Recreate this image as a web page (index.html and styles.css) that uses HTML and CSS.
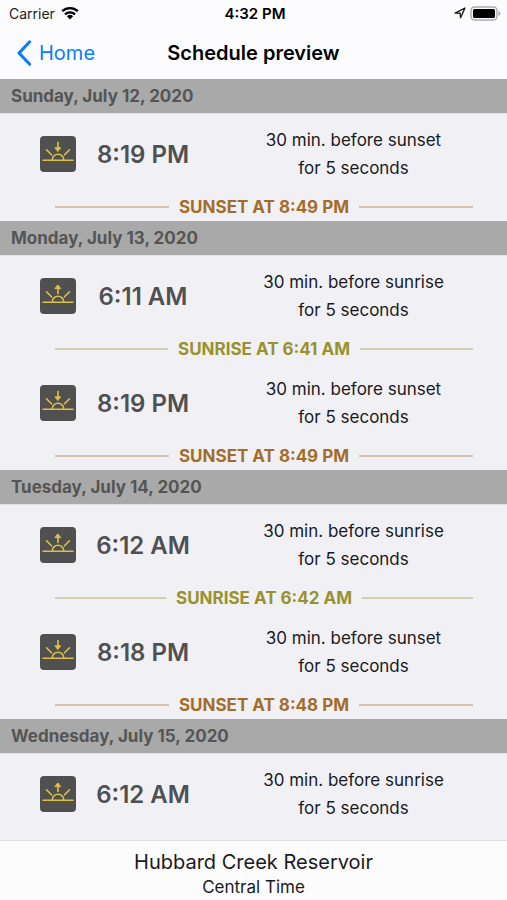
FILE: index.html
```html
<!DOCTYPE html>
<html lang="en">
<head>
<meta charset="utf-8">
<meta name="viewport" content="width=device-width, initial-scale=1">
<title>Schedule preview</title>
<link rel="stylesheet" href="styles.css">
</head>
<body>
<svg class="defs" aria-hidden="true">
  <symbol id="sun" viewBox="0 0 36 36">
    <path d="M3 24.3h30M12.2 24a5.8 5.8 0 0 1 11.6 0M6.5 13.8l5 5M29.5 13.8l-5 5"/>
  </symbol>
  <symbol id="sunset" viewBox="0 0 36 36">
    <use href="#sun"/>
    <path d="M18 6.5v8"/><path class="tip" d="M15.3 11.8h5.4L18 15.2z"/>
  </symbol>
  <symbol id="sunrise" viewBox="0 0 36 36">
    <use href="#sun"/>
    <path d="M18 8v7.5"/><path class="tip" d="M15.3 10.6h5.4L18 7.2z"/>
  </symbol>
</svg>
<header class="top">
  <div class="status">
    <span class="carrier">Carrier
      <svg class="wifi" viewBox="0 0 18 14" aria-hidden="true"><path d="M1.2 5.2a11.2 11.2 0 0 1 15.6 0M4 8.3a7.2 7.2 0 0 1 10 0"/><path class="dot" d="M9 13.4 5.9 10.3a4.5 4.5 0 0 1 6.2 0z"/></svg>
    </span>
    <span class="clock">4:32 PM</span>
    <span class="power">
      <svg class="location" viewBox="0 0 12 12" aria-hidden="true"><path d="M1 6.1 10.9 1.1 6.6 10.7 6.2 6.2z"/></svg>
      <svg class="battery" viewBox="0 0 31 15" aria-hidden="true"><rect class="shell" x="1" y="1" width="26" height="13" rx="3.5"/><rect x="3" y="3" width="22" height="9" rx="1.5"/><path class="cap" d="M28.5 5q2 1 2 2.5t-2 2.5z"/></svg>
    </span>
  </div>
  <nav class="nav">
    <a class="back" href="#home"><svg class="chevron" viewBox="0 0 16 26" aria-hidden="true"><path d="M13.5 2 3 13l10.5 11"/></svg>Home</a>
    <h1>Schedule preview</h1>
  </nav>
</header>
<main class="list">
  <section>
    <h2>Sunday, July 12, 2020</h2>
    <div class="event"><svg class="icon"><use href="#sunset"/></svg><time>8:19 PM</time><p>30 min. before sunset<br>for 5 seconds</p></div>
    <div class="marker sunset">SUNSET AT 8:49 PM</div>
  </section>
  <section>
    <h2>Monday, July 13, 2020</h2>
    <div class="event"><svg class="icon"><use href="#sunrise"/></svg><time>6:11 AM</time><p>30 min. before sunrise<br>for 5 seconds</p></div>
    <div class="marker sunrise">SUNRISE AT 6:41 AM</div>
    <div class="event"><svg class="icon"><use href="#sunset"/></svg><time>8:19 PM</time><p>30 min. before sunset<br>for 5 seconds</p></div>
    <div class="marker sunset">SUNSET AT 8:49 PM</div>
  </section>
  <section>
    <h2>Tuesday, July 14, 2020</h2>
    <div class="event"><svg class="icon"><use href="#sunrise"/></svg><time>6:12 AM</time><p>30 min. before sunrise<br>for 5 seconds</p></div>
    <div class="marker sunrise">SUNRISE AT 6:42 AM</div>
    <div class="event"><svg class="icon"><use href="#sunset"/></svg><time>8:18 PM</time><p>30 min. before sunset<br>for 5 seconds</p></div>
    <div class="marker sunset">SUNSET AT 8:48 PM</div>
  </section>
  <section>
    <h2>Wednesday, July 15, 2020</h2>
    <div class="event"><svg class="icon"><use href="#sunrise"/></svg><time>6:12 AM</time><p>30 min. before sunrise<br>for 5 seconds</p></div>
  </section>
</main>
<footer class="place">
  <div class="name">Hubbard Creek Reservoir</div>
  <div class="zone">Central Time</div>
</footer>
</body>
</html>
```

FILE: styles.css
```css
* { box-sizing: border-box; }
body {
  margin: 0;
  min-height: 100vh;
  display: flex;
  flex-direction: column;
  background: #f1f0f5;
  color: #1a1a1c;
  font-family: Inter, "Liberation Sans", sans-serif;
  font-size: 17px;
}
h1, h2, p { margin: 0; }
svg { fill: none; flex: none; }
.defs { position: absolute; width: 0; height: 0; }

.top { background: #fcfcfe; color: #000; }
.status {
  display: grid;
  grid-template-columns: 1fr auto 1fr;
  align-items: center;
  height: 26px;
  padding: 0 6px 0 9px;
  font-size: 14px;
}
.carrier { display: flex; align-items: center; gap: 6px; color: #222; }
.wifi { width: 18px; height: 14px; stroke: #000; stroke-width: 2.3; }
.wifi .dot { fill: #000; stroke: none; }
.clock { font-size: 15px; font-weight: 600; }
.power { display: flex; align-items: center; justify-content: flex-end; gap: 4px; }
.location { width: 12px; height: 12px; stroke: #222; stroke-width: 1.4; stroke-linejoin: round; }
.battery { width: 31px; height: 15px; fill: #000; }
.battery .shell { fill: none; stroke: #aaa; stroke-width: 1.4; }
.battery .cap { fill: #aaa; }

.nav {
  display: grid;
  grid-template-columns: 1fr auto 1fr;
  align-items: center;
  height: 53px;
  padding: 0 16px;
}
.back {
  display: flex;
  align-items: center;
  gap: 7px;
  color: #0a7cff;
  font-size: 20px;
  text-decoration: none;
}
.chevron { width: 16px; height: 26px; stroke: currentColor; stroke-width: 3.2; stroke-linecap: round; stroke-linejoin: round; }
h1 { font-size: 20px; font-weight: 600; }

.list { flex: 1; }
h2 {
  height: 35px;
  padding-left: 11px;
  border-bottom: 1px solid #e2e2e5;
  background: #a9a9a9;
  color: #555;
  font-size: 17px;
  line-height: 34px;
  font-weight: 700;
}
.event {
  display: grid;
  grid-template-columns: 36px 134px 1fr;
  align-items: center;
  padding: 12px 28px 15px 40px;
}
.icon {
  width: 36px;
  height: 36px;
  border-radius: 4px;
  background: #505050;
  stroke: #dcc04a;
  stroke-width: 1.6;
  stroke-linecap: round;
}
.tip { fill: #dcc04a; stroke-width: 1; }
.event time { color: #505052; font-size: 24px; font-weight: 600; text-align: center; white-space: nowrap; }
.event p { padding-left: 18px; line-height: 28px; text-align: center; }
.marker {
  display: flex;
  align-items: center;
  gap: 10px;
  height: 24px;
  padding: 0 34px 4px 55px;
  font-weight: 700;
  line-height: 20px;
}
.marker::before, .marker::after { content: ""; flex: 1; height: 2px; background: currentColor; opacity: .35; }
.marker.sunset { color: #a36d29; }
.marker.sunrise { color: #98922d; }

.place {
  height: 60px;
  padding-top: 8px;
  border-top: 1px solid #dedee1;
  background: #fcfcfc;
  color: #1a1a1a;
  text-align: center;
}
.name { font-size: 20px; line-height: 26px; }
.zone { line-height: 24px; }
```
